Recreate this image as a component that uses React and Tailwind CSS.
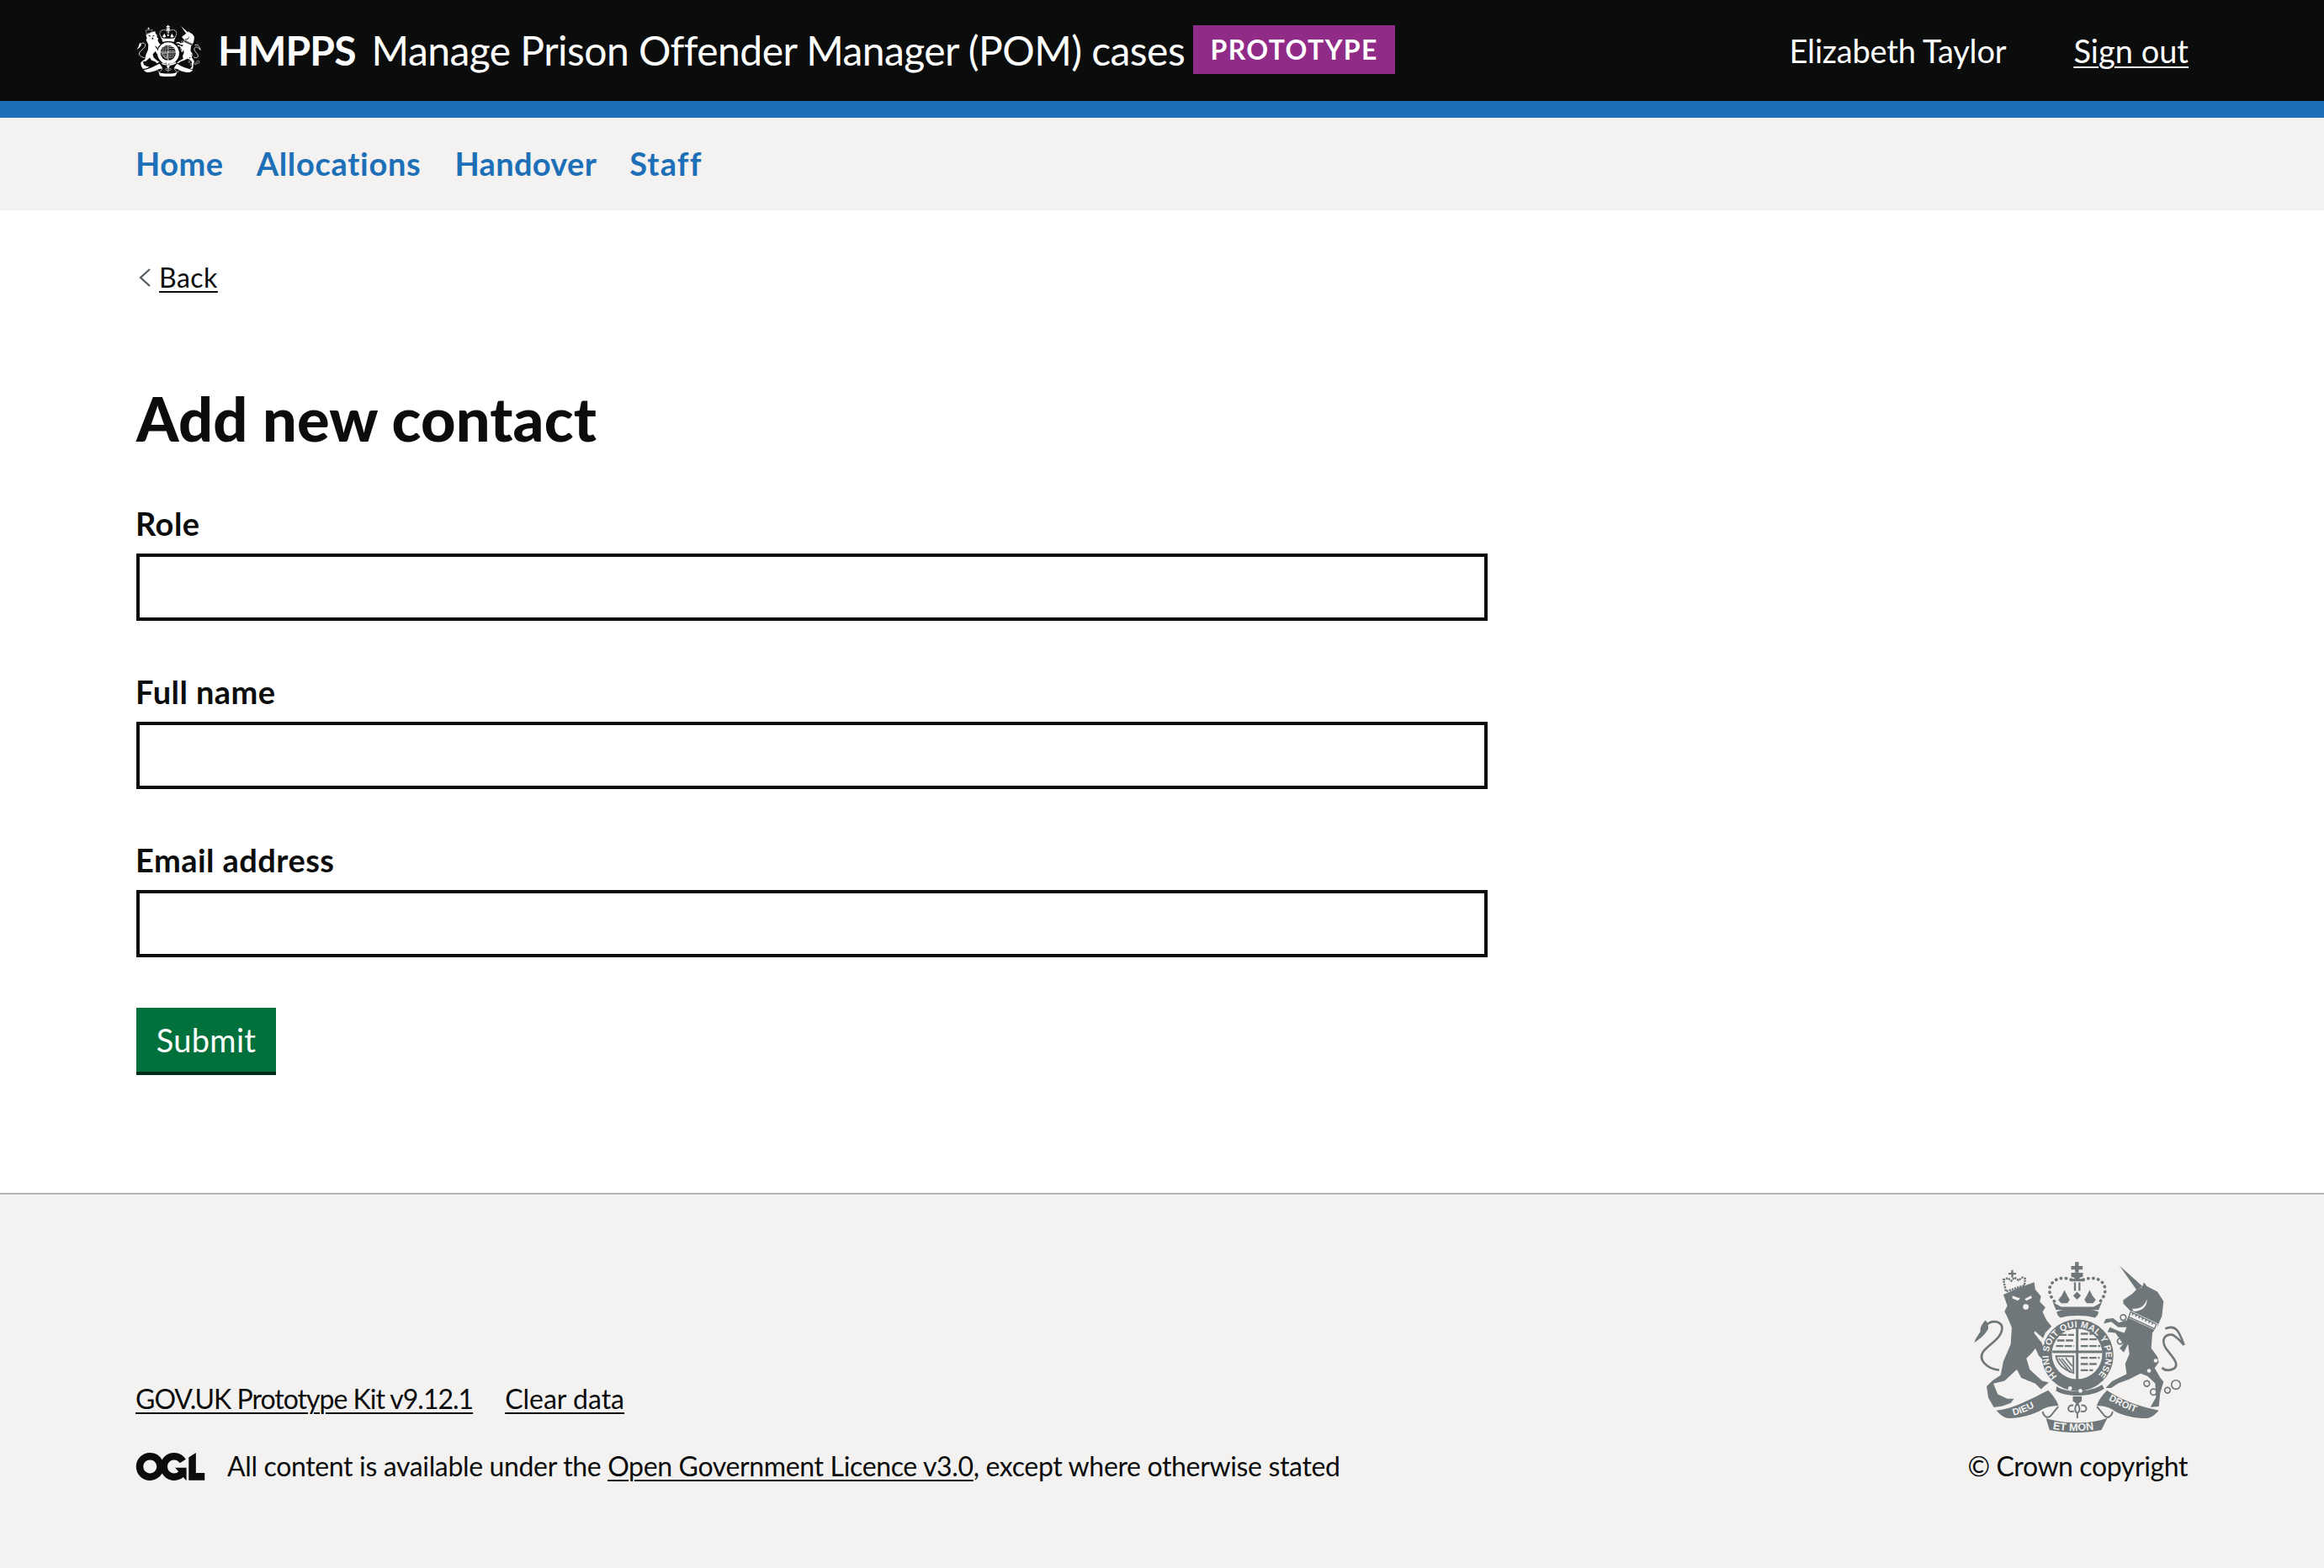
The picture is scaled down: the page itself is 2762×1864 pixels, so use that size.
import React from "react";

// Royal arms, drawn on the footer crest's own grid
function Crest({ className, cut, mottos = false }) {
  return (
    <svg viewBox="130 85 770 625" className={className} fill="currentColor" aria-hidden="true">
      {/* big crown */}
      <path d="M496 92h13v14h14v13h-14v10h-13v-10h-14v-13h14z" />
      <path d="M482 130h42v14l-12 4v8h-18v-8l-12-4z" />
      <g fill="none" stroke="currentColor" strokeWidth="11" strokeLinecap="round" strokeDasharray="1 17">
        <path d="M482 155C450 143 415 150 405 185C403 205 412 222 425 235" />
        <path d="M525 155C560 143 595 150 603 185C605 205 596 222 583 235" />
      </g>
      <path d="M480 152h48v9h-48zM492 165h7v30h-7zM508 165h7v30h-7zM503 198l14 14-14 14-14-14zM458 192l9 18 10 17-9 12h-22l-10-12 12-15zM548 192l-9 18-10 17 9 12h22l10-12-12-15zM416 235l30 17h116l30-17-12 28h-152z" />
      <path d="M430 270c25-14 125-14 150 0-2 12-8 18-14 21-30-10-92-10-122 0-6-3-12-9-14-21z" />

      {/* garter and shield */}
      <circle cx="505" cy="425" r="128" />
      <circle cx="503" cy="420" r="90" className={cut} />
      <path d="M499 328h9v195h-9zM415 408h178v9h-178z" />
      <g fill="none" stroke="currentColor" strokeWidth="7" strokeDasharray="26 5">
        <path d="M440 352H492M432 372H492M428 392H492" />
        <path d="M516 348H560M516 368H578M516 392H586" />
        <path d="M516 434H584M516 456H578M516 478H560" />
      </g>
      <path d="M428 428h62v60c-30-10-56-30-62-60z" fill="none" stroke="currentColor" strokeWidth="6" />
      <path d="M448 436l36 44M438 436l40 50M462 434l24 30" fill="none" stroke="currentColor" strokeWidth="5" />

      {/* buckle and fleur */}
      <path d="M430 536c30 24 120 24 162-6l8 14c-44 32-130 32-172 8z" />
      <circle cx="478" cy="543" r="7" className={cut} />
      <circle cx="515" cy="552" r="7" className={cut} />
      <path d="M488 572h32v16l-16 12-16-12z" />
      <path d="M504 596c-7 10-9 18-7 26 2 6 4 8 7 8s5-2 7-8c2-8 0-16-7-26zM490 604c-12-2-20 6-18 14 2 8 12 10 20 6M518 604c12-2 20 6 18 14-2 8-12 10-20 6M504 630v20" fill="none" stroke="currentColor" strokeWidth="6" />

      {/* lion */}
      <path d="M268 120h7v10h10v7h-10v10h-7v-10h-10v-7h10z" />
      <path d="M240 155l16-6 12 10 12-12 14 10 14-10 10 4-3 24-66 22z" fill="none" stroke="currentColor" strokeWidth="7" strokeDasharray="7 3" />
      <path d="M240 208l50-22 60-22 4 26 20 24-4 20 20 20-10 16 14 30 18 22-22 22-14 34 8 24 26 20 4 24-24 4-24-24-12-26-12 16-20 20 12 40 44 40 24 6-12 10-16 14-20-20-50-20-16-30-44 40-40 10 16 38 34 16 24 0-12 16-30 10-30 5-20-35-6-40 20-20 30-20 10-50 26-60 4-60-16-38-10-20 10-20z" />
      <path d="M272 212l28 10-8 8-20-8zM338 212l-22 12 6 6 20-10z" className={cut} />
      <circle cx="320" cy="252" r="10" className={cut} />
      <path d="M352 338l28 24 8 26-16-14-22-28z" className={cut} />
      <path d="M225 478C180 472 148 440 168 412C188 385 240 362 235 322C226 298 192 300 176 320" fill="none" stroke="currentColor" strokeWidth="8" />
      <path d="M176 300c-14 14-20 28-18 40-8 14-18 24-22 40 20-14 36-24 50-50 0-14-2-22-10-30z" />

      {/* unicorn */}
      <path d="M655 105l82 74-22 12z" />
      <path d="M735 182l7-17 10 13 38 20 22 34-6 53-14 33-20 27-4 55 22 30 5 20-15 20 20 35 12 15-12 40-5 48-30 2 20-35-3-50-27-25-25-10-40 20-40 15-25 17h-20l23-24 52-26-5-37 15-35-5-35-15 30-15-15 13-15-28-40-28-3 8-17 35 15 17 5 8-20-30 0-25-20-27 7 7-17 27-3 20 16 28-8 15-32-27-28v-12l32-23 15-15z" />
      <path d="M700 258c25 4 45-8 52-33 3 20-12 43-47 43z" className={cut} />
      <path d="M696 266l96 46-8 24-96-44z" className={cut} />
      <path d="M694 270l92 44-6 16-92-42z" fill="none" stroke="currentColor" strokeWidth="4" />
      <path d="M700 276l74 36" fill="none" stroke="currentColor" strokeWidth="9" strokeDasharray="5 8" />
      <path d="M818 330C860 310 870 350 885 388C870 372 862 362 845 352C820 348 800 365 820 400C842 430 870 455 850 472C835 480 820 482 806 470" fill="none" stroke="currentColor" strokeWidth="8" />
      <g className={cut}>
        <circle cx="792" cy="398" r="9" />
        <circle cx="784" cy="444" r="7" />
        <circle cx="760" cy="480" r="7" />
      </g>
      <g fill="none" stroke="currentColor" strokeWidth="5">
        <circle cx="668" cy="290" r="10" />
        <circle cx="657" cy="375" r="10" />
        <circle cx="752" cy="526" r="10" />
        <circle cx="776" cy="556" r="11" />
        <circle cx="826" cy="550" r="10" />
        <circle cx="856" cy="530" r="16" />
      </g>

      {/* ribbon */}
      <path d="M215 622C280 615 340 580 400 550C418 568 430 586 437 605C410 606 388 612 376 620C350 636 300 650 260 650C240 648 228 636 215 622z" />
      <path d="M795 622C730 610 660 585 610 550C592 568 580 586 573 605C600 606 622 612 634 622C660 640 710 650 750 650C770 648 782 636 795 622z" />
      <path d="M392 650C460 672 560 672 612 648L590 692C530 704 470 704 405 692z" />
      <path d="M380 626C384 645 398 652 410 640L436 608M630 626C626 645 612 652 600 640L574 608" fill="none" stroke="currentColor" strokeWidth="6" />
      {mottos && (
        <g className={cut} fontFamily="'Liberation Sans', sans-serif" fontWeight="700">
          <defs>
            <path id="garter-ring" d="M432 500A102 102 0 1 1 582 492" />
            <path id="scroll-left" d="M276 640C310 632 345 615 378 596" />
            <path id="scroll-right" d="M615 585C655 605 700 628 745 640" />
            <path id="scroll-mid" d="M416 688C470 698 540 698 592 684" />
          </defs>
          <text fontSize="32" letterSpacing="1">
            <textPath href="#garter-ring">HONI SOIT QUI MAL Y PENSE</textPath>
          </text>
          <text fontSize="34">
            <textPath href="#scroll-left">DIEU</textPath>
          </text>
          <text fontSize="34">
            <textPath href="#scroll-right">DROIT</textPath>
          </text>
          <text fontSize="38">
            <textPath href="#scroll-mid">ET MON</textPath>
          </text>
        </g>
      )}
    </svg>
  );
}

function OglLogo({ className }) {
  return (
    <svg viewBox="0 0 483.2 195.7" className={className} fill="currentColor" aria-hidden="true">
      <path d="M421.5 142.8V.1l-50.7 32.3v161.1h112.4v-50.7zm-122.3-9.6A47.12 47.12 0 0 1 221 97.8c0-26 21.1-47.1 47.1-47.1 16.7 0 31.4 8.7 39.7 21.8l42.7-27.2A97.63 97.63 0 0 0 268.1 0c-36.5 0-68.3 20.1-85.1 49.7A98 98 0 0 0 97.8 0C43.9 0 0 43.9 0 97.8s43.9 97.8 97.8 97.8c36.5 0 68.3-20.1 85.1-49.7a97.76 97.76 0 0 0 149.6 25.4l19.4 22.2h3v-87.8h-80l24.3 27.5zM97.8 145c-26 0-47.1-21.1-47.1-47.1s21.1-47.1 47.1-47.1 47.2 21 47.2 47S123.8 145 97.8 145" />
    </svg>
  );
}

function Field({ label, id }) {
  return (
    <div className="mb-[60px]">
      <label htmlFor={id} className="block -ml-[1px] mb-[10px] h-[50px] text-[38px] leading-[48px] font-bold tracking-[0.45px]">
        {label}
      </label>
      <input id={id} type="text" className="block w-[1606px] h-[80px] border-4 border-[#0b0c0c] bg-white" />
    </div>
  );
}

export default function App() {
  return (
    <div className="min-h-[1864px] flex flex-col bg-white text-[#0b0c0c] font-['Lato','Noto_Sans',sans-serif]">
      <header className="h-[140px] shrink-0 bg-[#0b0c0c] border-b-[20px] border-[#1d70b8] text-white pl-[162px] pr-[161px] flex items-center justify-between">
        <div className="flex items-center">
          <Crest className="w-[78px] h-[63px] text-white" cut="fill-[#0b0c0c]" />
          <span className="ml-[19px] text-[48px] leading-[60px] font-bold tracking-[-0.9px]">HMPPS</span>
          <span className="ml-[19px] text-[48px] leading-[60px] tracking-[-0.55px]">Manage Prison Offender Manager (POM) cases</span>
          <span className="ml-[10px] -mt-[2px] w-[240px] h-[58px] bg-[#912b88] flex items-center justify-center text-[32px] font-bold tracking-[1.4px]">
            PROTOTYPE
          </span>
        </div>
        <div className="flex items-center gap-[80px] text-[38px]">
          <span className="tracking-[-0.2px]">Elizabeth Taylor</span>
          <a href="#" className="underline decoration-2 underline-offset-[4px]">Sign out</a>
        </div>
      </header>

      <nav className="h-[110px] shrink-0 bg-[#f3f2f1] pl-[161px] pb-[2px] flex items-center gap-[40px] text-[38px] font-bold tracking-[0.5px] text-[#1d70b8]">
        <a href="#">Home</a>
        <a href="#" className="-ml-[1px] tracking-[0.7px]">Allocations</a>
        <a href="#" className="tracking-[0.3px]">Handover</a>
        <a href="#" className="-ml-[1px] tracking-[1.2px]">Staff</a>
      </nav>

      <main className="flex-1 pl-[162px]">
        <a href="#" className="mt-[60px] flex items-center h-[40px] text-[32px] leading-[40px]">
          <svg viewBox="0 0 14 22" className="ml-[3px] w-[14px] h-[22px] mr-[10px]" fill="none" stroke="#505a5f" strokeWidth="2.2" aria-hidden="true">
            <path d="M13 1L2 11l11 10" />
          </svg>
          <span className="underline decoration-2 underline-offset-[4px] tracking-[0.5px]">Back</span>
        </a>
        <h1 className="mt-[97px] mb-[51px] text-[72px] leading-[100px] font-black tracking-[0.2px]">Add new contact</h1>
        <form onSubmit={(e) => e.preventDefault()}>
          <Field label="Role" id="role" />
          <Field label="Full name" id="full-name" />
          <Field label="Email address" id="email" />
          <button type="submit" className="w-[166px] h-[80px] bg-[#00703c] border-b-4 border-[#002d18] text-white text-[38px] tracking-[0.3px]">
            Submit
          </button>
        </form>
      </main>

      <footer className="h-[446px] shrink-0 bg-[#f3f2f1] border-t-2 border-[#b1b4b6] pl-[161px] pr-[162px] flex items-start justify-between text-[32px]">
        <div className="mt-[223px]">
          <div className="flex gap-[38px] h-[40px] leading-[40px]">
            <a href="#" className="underline decoration-2 underline-offset-[4px] tracking-[-1px]">GOV.UK Prototype Kit v9.12.1</a>
            <a href="#" className="underline decoration-2 underline-offset-[4px]">Clear data</a>
          </div>
          <div className="mt-[40px] flex items-center h-[40px] leading-[40px]">
            <OglLogo className="w-[83px] h-[33px] mr-[26px] text-[#0b0c0c]" />
            <span className="tracking-[-0.35px]">
              All content is available under the{" "}
              <a href="#" className="underline decoration-2 underline-offset-[4px]">Open Government Licence v3.0</a>
              , except where otherwise stated
            </span>
          </div>
        </div>
        <div className="mt-[78px] flex flex-col items-end">
          <Crest className="w-[257px] h-[208px] mr-[-1px] text-[#6f777b]" cut="fill-[#f3f2f1]" mottos />
          <span className="mt-[17px] h-[40px] leading-[40px] tracking-[-0.4px]">© Crown copyright</span>
        </div>
      </footer>
    </div>
  );
}
